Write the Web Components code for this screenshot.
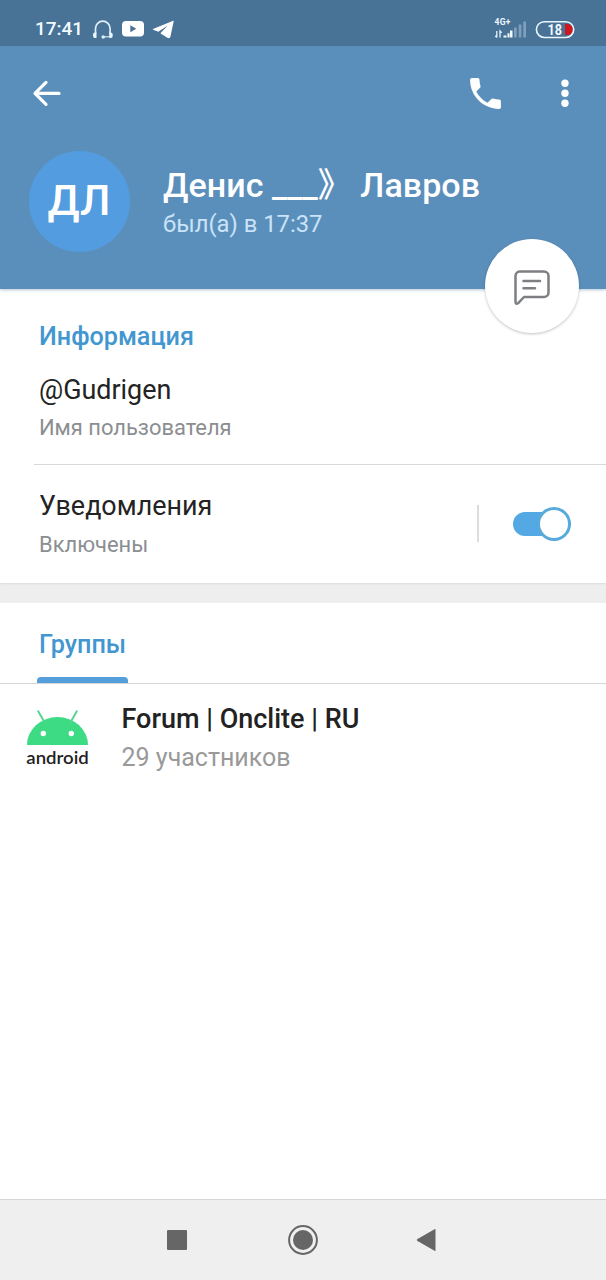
<!DOCTYPE html>
<html lang="ru">
<head>
<meta charset="utf-8">
<title>Профиль</title>
<style>
body { margin: 0; font-family: Roboto, "Noto Sans", sans-serif; background: #fff; color: #212121; }
</style>
</head>
<body>
<profile-app></profile-app>
<script>
function define(name, html) {
  const t = document.createElement('template');
  t.innerHTML = html;
  customElements.define(name, class extends HTMLElement {
    constructor() {
      super();
      this.attachShadow({ mode: 'open' }).appendChild(t.content.cloneNode(true));
    }
  });
}

define('status-bar', `
<style>
:host { display: flex; height: 46px; box-sizing: border-box; padding: 17px 30px 0 35px; background: #487296; color: #f0faff; align-items: flex-start; }
.time { font-size: 19px; line-height: 24px; font-weight: 500; letter-spacing: -.05px; width: 47px; white-space: nowrap; }
.left { margin: 2px 0 0 10px; flex: none; }
.right { margin: 0 0 0 auto; }
svg { display: block; }
</style>
<span class="time">17:41</span>
<svg class="left" width="84" height="22" viewBox="92 19 84 22">
  <path d="M95.5 34V28.5a7.3 7.3 0 0 1 14.600 0V34" fill="none" stroke="#dff0fc" stroke-width="1.700"/>
  <path d="M96.500 32.500v5.500h-1.500a2 2 0 0 1-2-2v-1.500a2 2 0 0 1 2-2zM109.200 32.500v5.500h1.500a2 2 0 0 0 2-2v-1.500a2 2 0 0 0-2-2z" fill="#e8f6ff"/>
  <path d="M110 36.800h-6" stroke="#cfe4f4" stroke-width="1.200"/><circle cx="103.200" cy="37" r="1.800" fill="#d6edff"/>
  <rect x="122" y="21" width="22" height="15.500" rx="4" fill="#fff"/>
  <path d="M130.300 25.300v7l6-3.500z" fill="#487296"/>
  <path d="M173.200 20.800 153 28.900q-.5.5.2.900l5.100 2 9.500-6.200-7.200 7.300v.7l6.800 4.200q2.400 1.100 3-1l3.200-15.100q.3-1.200-.4-.9z" fill="#fff"/>
</svg>
<svg class="right" width="82" height="24" viewBox="494 17 82 24">
  <text x="494.500" y="25.300" font-size="8.500" font-weight="700" textLength="16" fill="#eef8ff">4G+</text>
  <path d="M496.800 31v6.500M495.300 35.800l1.500 1.700M500 37.500v-6.500l1.700 1.800" stroke="#e2f1fc" stroke-width="1.300" fill="none"/>
  <path d="M503.500 35.500h3v2h-3zM507.500 33.200h2v4.300h-2zM510 30.500h2.500v7H510z" fill="#f3fbff"/>
  <path d="M514 27.500h2.700v10H514zM518.700 24.500h2.700v13h-2.700zM523.300 21.500h2.700v16h-2.700z" fill="#7f9fba"/>
  <path d="M565 24h2.500a5.500 5.500 0 0 1 0 11H565z" fill="#cf1720"/>
  <rect x="536.400" y="21.700" width="37.300" height="15.800" rx="7.900" fill="none" stroke="#eaf7ff" stroke-width="1.600"/>
  <text x="547.500" y="34.700" font-size="15" font-weight="700" textLength="14.500" lengthAdjust="spacingAndGlyphs" fill="#f2faff">18</text>
</svg>`);

define('app-toolbar', `
<style>
:host { display: flex; height: 94px; box-sizing: border-box; padding: 0 36px 0 32px; align-items: center; }
svg { display: block; }
.call { margin-left: auto; margin-right: 59.500px; }
</style>
<svg width="30" height="30" viewBox="0 0 30 30"><path d="M27 15.400H3.500M14 4.400 3 15.400l11 11" fill="none" stroke="#fff" stroke-width="3.200" stroke-linecap="round" stroke-linejoin="round"/></svg>
<svg class="call" width="31" height="31" viewBox="2.950 2.950 18.100 18.100"><path fill="#fff" d="M6.620 10.790c1.440 2.830 3.760 5.140 6.590 6.590l2.200-2.200c.27-.27.670-.36 1.020-.24 1.120.37 2.330.57 3.570.57.550 0 1 .45 1 1V20c0 .55-.45 1-1 1C10.610 21 3 13.390 3 4c0-.55.450-1 1-1h3.500c.55 0 1 .45 1 1 0 1.250.2 2.450.570 3.570.110.350.030.740-.25 1.020z"/></svg>
<svg width="10" height="30" viewBox="0 0 10 30" fill="#fff"><circle cx="5" cy="5.300" r="3.700"/><circle cx="5" cy="15.300" r="3.700"/><circle cx="5" cy="25.300" r="3.700"/></svg>`);

define('user-avatar', `
<style>
:host { display: flex; width: 101px; height: 100.500px; border-radius: 50%; background: #539ce0; color: #fff; align-items: center; justify-content: center; font-size: 43px; font-weight: 500; line-height: 50px; }
span { margin-top: -2px; }
</style><span><slot></slot></span>`);

define('profile-head', `
<style>
:host { display: flex; height: 149px; box-sizing: border-box; padding: 11px 0 0 28.500px; }
.text { margin: 15px 0 0 33.500px; white-space: nowrap; }
.name { font: 500 34px/38px Roboto, "Noto Sans CJK SC", sans-serif; color: #fff; white-space: pre; letter-spacing: .05px; }
.seen { margin-top: 5.500px; font-size: 23.800px; line-height: 28px; color: #c9e3f8; }
</style>
<user-avatar>ДЛ</user-avatar>
<div class="text"><div class="name"><slot name="name"></slot></div><div class="seen"><slot name="seen"></slot></div></div>`);

define('message-button', `
<style>
:host { display: flex; width: 94px; height: 94px; border-radius: 50%; background: #fff; box-shadow: 0 1px 3px rgba(0,0,0,.24); align-items: center; justify-content: center; }
svg { display: block; margin-top: 2px; }
</style>
<svg width="38" height="38" viewBox="513 268 38 38" fill="none" stroke="#7d7f82" stroke-width="2.500" stroke-linecap="round" stroke-linejoin="round"><path d="M519.500 271.500h24.500a4.500 4.500 0 0 1 4.500 4.500v16.500a4.500 4.500 0 0 1-4.500 4.500h-20l-6 6.300q-2.300 1.500-2.500-1.300v-26a4.500 4.500 0 0 1 4-4.500z"/><path d="M523.500 281H540M523.500 288.300h11.500"/></svg>`);

define('profile-header', `
<style>
:host { display: block; position: relative; height: 289px; background: #5b8fbb; box-shadow: 0 1px 3px rgba(40,90,130,.35); }
message-button { position: absolute; right: 27px; top: 239px; }
</style>
<status-bar></status-bar>
<app-toolbar></app-toolbar>
<profile-head><span slot="name">Денис ___》 Лавров</span><span slot="seen">был(а) в 17:37</span></profile-head>
<message-button></message-button>`);

define('section-title', `
<style>:host { display: block; font-size: 25.200px; line-height: 28px; font-weight: 500; color: #4297d0; white-space: nowrap; }</style><slot></slot>`);

define('info-row', `
<style>
:host { display: block; white-space: nowrap; }
.value { font-size: 26.900px; line-height: 32px; color: #232323; }
.label { margin-top: 9.500px; font-size: 21.900px; line-height: 26px; color: #8b8e91; }
</style>
<div class="value"><slot></slot></div><div class="label"><slot name="label"></slot></div>`);

define('toggle-switch', `
<style>
:host { display: flex; width: 58px; height: 34px; align-items: center; }
.track { width: 44px; height: 24px; border-radius: 12px; background: #54a9e5; }
.knob { flex: none; box-sizing: border-box; width: 34px; height: 34px; border: 3.200px solid #58a9dc; border-radius: 50%; background: #fff; margin-left: -20px; }
</style><div class="track"></div><div class="knob"></div>`);

define('notify-row', `
<style>
:host { display: flex; height: 118px; box-sizing: border-box; padding: 25px 35px 0 39px; }
.sep { width: 2px; height: 37px; background: #dcdcdc; margin: 15px 34px 0 auto; }
toggle-switch { margin-top: 17px; flex: none; }
</style>
<info-row>Уведомления<span slot="label">Включены</span></info-row>
<div class="sep"></div><toggle-switch></toggle-switch>`);

define('tab-bar', `
<style>
:host { display: flex; height: 81px; box-sizing: border-box; border-bottom: 1px solid #d6d6d6; padding: 0 37px; }
.tab { display: flex; flex-direction: column; justify-content: space-between; width: 91px; }
section-title { padding: 28px 2px 0; }
.line { height: 6px; border-radius: 4px 4px 0 0; background: #549fdb; }
</style>
<div class="tab"><section-title><slot></slot></section-title><div class="line"></div></div>`);

define('android-logo', `
<style>:host, svg { display: block; }</style>
<svg width="66" height="66" viewBox="25 705 66 66">
  <path d="M27 745a30.500 28 0 0 1 61 0z" fill="#3ddc84"/>
  <path d="M38.200 711.300l6 10.500M76.800 711.300l-6 10.500" stroke="#55d590" stroke-width="2" stroke-linecap="round"/>
  <circle cx="43.300" cy="733.500" r="2.700" fill="#fff"/><circle cx="71.300" cy="733.500" r="2.700" fill="#fff"/>
  <text x="26.300" y="763.500" font-family="Lato" font-weight="600" font-size="17.500" textLength="62.500" lengthAdjust="spacingAndGlyphs" fill="#222">android</text>
</svg>`);

define('group-row', `
<style>
:host { display: flex; padding: 21px 0 0 25px; }
.text { margin: -1px 0 0 30.500px; white-space: nowrap; }
.name { font-size: 27px; line-height: 30px; font-weight: 500; color: #222; }
.count { margin-top: 9px; font-size: 25px; line-height: 30px; color: #999; }
</style>
<android-logo></android-logo>
<div class="text"><div class="name"><slot></slot></div><div class="count"><slot name="count"></slot></div></div>`);

define('nav-bar', `
<style>
:host { display: grid; grid-template-columns: 124px 127px 120px; justify-content: center; justify-items: center; align-items: center; height: 81px; box-sizing: border-box; border-top: 1px solid #d6d6d6; background: #efefef; padding-right: 5px; }
svg { display: block; }
</style>
<svg width="20" height="20"><rect width="20" height="20" rx="1" fill="#666"/></svg>
<svg width="30" height="30"><circle cx="15" cy="15" r="13.900" fill="none" stroke="#666" stroke-width="2"/><circle cx="15" cy="15" r="10" fill="#666"/></svg>
<svg width="20" height="22"><path d="M19.500.6v20.800q0 1-1 .4L1.500 12q-1.300-1 0-2L18.500.2q1-.6 1 .4z" fill="#666"/></svg>`);

define('profile-app', `
<style>
:host { display: flex; flex-direction: column; height: 1280px; overflow: hidden; background: #fff; }
profile-header { flex: none; z-index: 1; }
.info { height: 175px; box-sizing: border-box; padding: 34px 0 0 39px; }
.info info-row { margin-top: 22.500px; }
.divider { height: 1px; margin-left: 34px; background: #d9d9d9; }
.gap { height: 20px; background: #eee; box-shadow: inset 0 2px 2px -1px #dcdcdc; }
nav-bar { margin-top: auto; }
</style>
<profile-header></profile-header>
<div class="info"><section-title>Информация</section-title>
<info-row>@Gudrigen<span slot="label">Имя пользователя</span></info-row></div>
<div class="divider"></div>
<notify-row></notify-row>
<div class="gap"></div>
<tab-bar>Группы</tab-bar>
<group-row>Forum | Onclite | RU<span slot="count">29 участников</span></group-row>
<nav-bar></nav-bar>`);
</script>
</body>
</html>
